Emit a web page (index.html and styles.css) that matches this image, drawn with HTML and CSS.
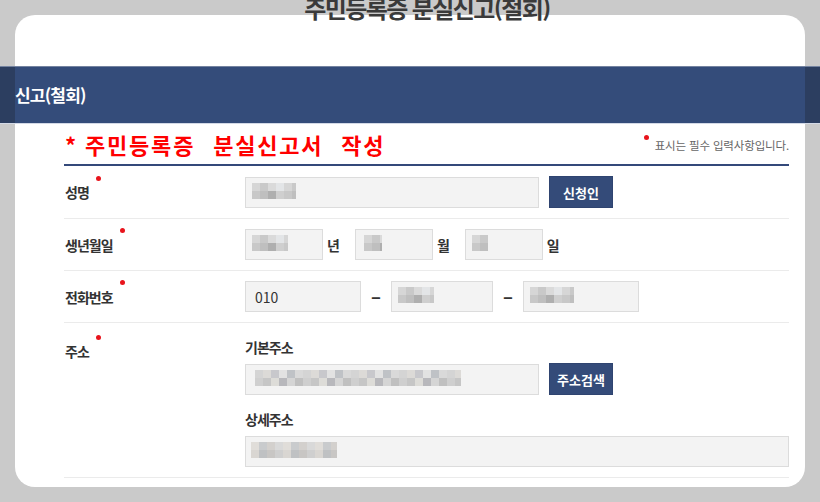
FILE: index.html
```html
<!DOCTYPE html>
<html lang="ko">

<head>
    <meta charset="UTF-8">
    <meta name="viewport" content="width=device-width, initial-scale=1.0">
    <title>주민등록증 분실신고(철회)</title>
    <link rel="stylesheet" href="styles.css">
</head>

<body>
    <div class="page-title">주민등록증 분실신고(철회)</div>

    <div class="modal">
        <div class="modal-top"></div>
        <div class="modal-bar">신고(철회)</div>

        <div class="form-wrap">
            <div class="form-head">
                <h3 class="form-title"><span class="star">*</span>주민등록증 분실신고서 작성</h3>
                <p class="form-note"><span class="dot"></span>표시는 필수 입력사항입니다.</p>
            </div>

            <!-- 성명 -->
            <div class="form-row">
                <div class="form-label"><span class="req">성명</span></div>
                <div class="form-field">
                    <input type="text" class="field w-name masked m-name" readonly>
                    <button class="btn">신청인</button>
                </div>
            </div>

            <!-- 생년월일 -->
            <div class="form-row">
                <div class="form-label"><span class="req">생년월일</span></div>
                <div class="form-field">
                    <input type="text" class="field w-date masked m-year" readonly>
                    <span class="unit">년</span>
                    <input type="text" class="field w-date masked m-month" readonly>
                    <span class="unit">월</span>
                    <input type="text" class="field w-date masked m-day" readonly>
                    <span class="unit">일</span>
                </div>
            </div>

            <!-- 전화번호 -->
            <div class="form-row">
                <div class="form-label"><span class="req">전화번호</span></div>
                <div class="form-field">
                    <input type="text" class="field w-tel" value="010" readonly>
                    <span class="dash">−</span>
                    <input type="text" class="field w-tel-mid masked m-tel2" readonly>
                    <span class="dash">−</span>
                    <input type="text" class="field w-tel masked m-tel3" readonly>
                </div>
            </div>

            <!-- 주소 -->
            <div class="form-row addr">
                <div class="form-label"><span class="req">주소</span></div>
                <div class="form-field column">
                    <div class="sub-label">기본주소</div>
                    <div class="addr-line">
                        <input type="text" class="field w-name masked m-addr" readonly>
                        <button class="btn">주소검색</button>
                    </div>
                    <div class="sub-label second">상세주소</div>
                    <input type="text" class="field w-full masked m-detail" readonly>
                </div>
            </div>
        </div>
    </div>
</body>

</html>
```

FILE: styles.css
```css
body {
    margin: 0;
    height: 502px;
    overflow: hidden;
    background: #cacaca;
    font-family: 'Noto Sans CJK KR', 'Noto Sans', sans-serif;
    color: #333;
}

/* 상단 페이지 제목 (모달 뒤로 일부 보임) */
.page-title {
    position: relative;
    z-index: 1;
    height: 15px;
    line-height: 16px;
    padding-left: 34px;
    text-align: center;
    font-size: 24px;
    font-weight: 700;
    letter-spacing: -1.6px;
    color: #3a3a3a;
    white-space: nowrap;
}

.modal {
    box-sizing: border-box;
    height: 472px;
    margin: 0 15px;
    background: #fff;
    border-radius: 20px;
}

.modal-top {
    height: 51px;
}

.modal-bar {
    height: 56px;
    margin: 0 -15px;
    padding-left: 15px;
    line-height: 56px;
    border-top: 1px solid #7483a0;
    border-bottom: 1px solid #d3d9e6;
    background: linear-gradient(to right, #2c3e60 0 15px, #344c7a 15px 805px, #2c3e60 805px);
    color: #fff;
    font-size: 17px;
    font-weight: 700;
    letter-spacing: -0.8px;
}

.form-wrap {
    margin: 0 16px 0 49px;
}

.form-head {
    display: flex;
    justify-content: space-between;
    align-items: center;
    height: 40px;
    border-bottom: 2px solid #34497a;
}

.form-title {
    margin: 0;
    padding-left: 1px;
    color: #ff0000;
    font-size: 22px;
    font-weight: 700;
    letter-spacing: 1.8px;
    word-spacing: 10px;
}

.form-title .star {
    margin-right: 7px;
}

.form-note {
    margin: 2px 0 0;
    font-size: 11.5px;
    color: #666;
    letter-spacing: -0.15px;
}

.dot,
.req::after {
    display: inline-block;
    width: 5px;
    height: 5px;
    border-radius: 50%;
    background: #e8141c;
    position: relative;
}

.form-note .dot {
    margin-right: 6px;
    top: -10px;
}

.req::after {
    content: "";
    margin-left: 7px;
    vertical-align: middle;
    top: -16px;
}

.form-row {
    display: flex;
    align-items: center;
    padding: 10px 0;
    border-bottom: 1px solid #ebebeb;
}

.form-row.addr {
    align-items: flex-start;
    padding: 14px 0 10px;
}

.form-label {
    width: 180px;
    padding-left: 1px;
    font-size: 14px;
    font-weight: 700;
    line-height: 20px;
    letter-spacing: -1px;
}

.addr .form-label {
    padding-top: 4px;
}

.form-field {
    display: flex;
    align-items: center;
}

.form-field.column {
    flex-direction: column;
    align-items: flex-start;
    width: 544px;
}

.field {
    box-sizing: border-box;
    height: 31px;
    margin: 0;
    padding: 0 9px;
    border: 1px solid #dcdcdc;
    background-color: #f3f3f3;
    font-family: inherit;
    font-size: 14px;
    color: #333;
    outline: none;
}

.w-name {
    width: 294px;
}

.w-date {
    width: 78px;
}

.w-tel {
    width: 116px;
}

.w-tel-mid {
    width: 102px;
}

.w-full {
    width: 544px;
}

/* 개인정보 모자이크 */
.masked {
    background-repeat: no-repeat;
    background-image:
        repeating-linear-gradient(90deg, #d6d6d6 0 8px, #c9c9c9 8px 16px, #dadada 16px 24px, #e3e5e7 24px 32px),
        repeating-linear-gradient(90deg, #c8c8c8 0 8px, #bfbfbf 8px 16px, #afafaf 16px 24px, #cfcfcf 24px 32px);
    background-position: 6px 5px, 6px 13px;
}

.m-name {
    background-size: 44px 8px;
}

.m-year {
    background-size: 36px 8px;
}

.m-month {
    background-size: 18px 8px;
    background-position: 8px 5px, 8px 13px;
}

.m-day {
    background-size: 16px 8px;
}

.m-tel2 {
    background-size: 36px 8px;
}

.m-tel3 {
    background-size: 44px 8px;
}

.m-addr {
    background-size: 206px 8px;
    background-image:
        repeating-linear-gradient(90deg, #d4d4d4 0 8px, #dcdad7 8px 16px, #c8c8cc 16px 24px, #e2e2e2 24px 32px, #bfc2c6 32px 40px, #d9d9d9 40px 48px),
        repeating-linear-gradient(90deg, #cfcfcf 0 8px, #c6c6c6 8px 16px, #dddcd8 16px 24px, #b8b8bc 24px 32px, #d5d5d5 32px 40px, #c0c0c0 40px 48px);
    background-position: 9px 5px, 9px 13px;
}

.m-detail {
    background-size: 86px 8px;
    background-image:
        repeating-linear-gradient(90deg, #e0ddd9 0 8px, #c9cbcd 8px 16px, #d3d0cd 16px 24px, #d9d9d9 24px 32px),
        repeating-linear-gradient(90deg, #d9d6d2 0 8px, #bfc1c3 8px 16px, #c8c6c4 16px 24px, #cfcfcf 24px 32px);
    background-position: 5px 5px, 5px 13px;
}

.unit {
    margin: 0 15px 0 4px;
    font-size: 14px;
    font-weight: 700;
}

.dash {
    width: 30px;
    text-align: center;
    font-size: 16px;
    font-weight: 700;
}

.btn {
    width: 64px;
    height: 32px;
    margin-left: 10px;
    border: 1px solid #2f4470;
    background: #344b79;
    color: #fff;
    font-family: inherit;
    font-size: 13px;
    font-weight: 700;
    cursor: pointer;
}

.sub-label {
    font-size: 14px;
    font-weight: 700;
    line-height: 20px;
    letter-spacing: -1px;
    margin-bottom: 6px;
}

.sub-label.second {
    margin-top: 14px;
    margin-bottom: 7px;
}

.addr-line {
    display: flex;
    align-items: center;
}
```
